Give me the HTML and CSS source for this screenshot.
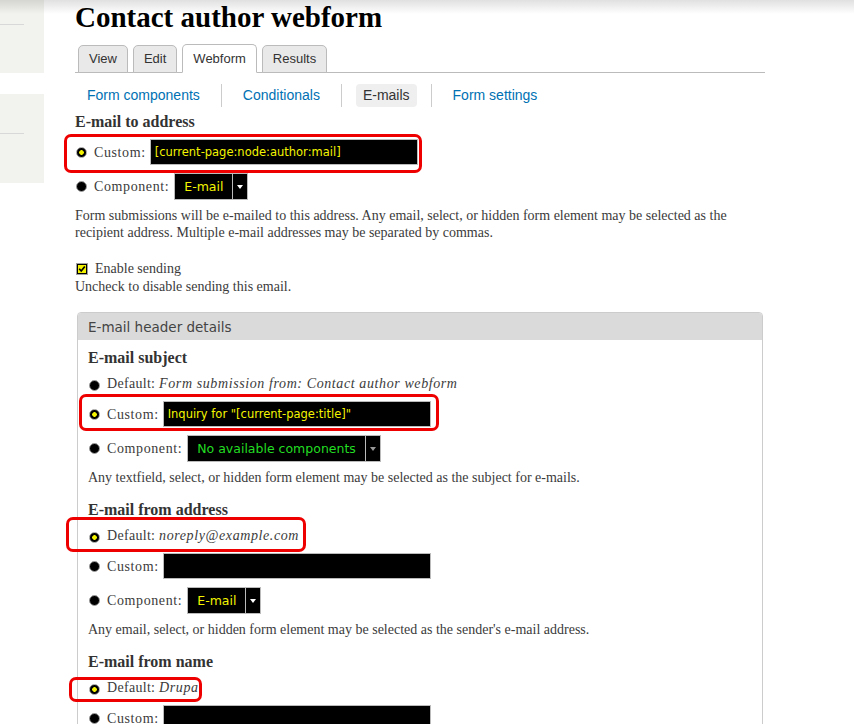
FILE: index.html
```html
<!DOCTYPE html>
<html lang="en">
<head>
<meta charset="utf-8">
<title>Contact author webform</title>
<link rel="stylesheet" href="styles.css">
</head>
<body>
<div class="shade"></div>
<div class="page">
  <aside class="sidebar">
    <div class="sb-block sb1"><div class="sb-line"></div></div>
    <div class="sb-block sb2"><div class="sb-line"></div></div>
  </aside>
  <main class="main">
    <h1 class="title">Contact author webform</h1>
    <ul class="tabs">
      <li class="tab">View</li>
      <li class="tab">Edit</li>
      <li class="tab active">Webform</li>
      <li class="tab">Results</li>
    </ul>
    <ul class="subtabs">
      <li><a href="#">Form components</a></li>
      <li><a href="#">Conditionals</a></li>
      <li><a href="#" class="current">E-mails</a></li>
      <li><a href="#">Form settings</a></li>
    </ul>

    <section class="group top">
      <h2 class="h">E-mail to address</h2>
      <div class="opts">
        <div class="opt mark m1"><span class="radio on"></span><span class="lbl">Custom:</span><input class="txt" type="text" value="[current-page:node:author:mail]"></div>
        <div class="opt"><span class="radio"></span><span class="lbl p">Component:</span><span class="select"><span class="val">E-mail</span><span class="arrow"></span></span></div>
      </div>
      <p class="desc">Form submissions will be e-mailed to this address. Any email, select, or hidden form element may be selected as the<br>recipient address. Multiple e-mail addresses may be separated by commas.</p>
    </section>

    <div class="enable">
      <div class="cbrow">
        <svg class="cb" width="12" height="12" viewBox="0 0 12 12"><rect x="0.5" y="0.5" width="11" height="11" fill="#000" stroke="#a0a0a0"/><rect x="2" y="2" width="8" height="8" fill="#f2f200"/><path d="M3.2 5.8 L5.2 8 L8.8 3.4" stroke="#000" stroke-width="1.7" fill="none"/></svg>
        <span>Enable sending</span>
      </div>
      <div class="hint">Uncheck to disable sending this email.</div>
    </div>

    <div class="fieldset">
      <div class="legend">E-mail header details</div>
      <div class="fs-body">
        <section class="group">
          <h3 class="h">E-mail subject</h3>
          <div class="opts">
            <div class="opt text"><span class="radio"></span><span class="lbl d">Default: <em>Form submission from: Contact author webform</em></span></div>
            <div class="opt mark m2"><span class="radio on"></span><span class="lbl">Custom:</span><input class="txt" type="text" value="Inquiry for &quot;[current-page:title]&quot;"></div>
            <div class="opt"><span class="radio"></span><span class="lbl p">Component:</span><span class="select none"><span class="val">No available components</span><span class="arrow"></span></span></div>
          </div>
          <p class="desc">Any textfield, select, or hidden form element may be selected as the subject for e-mails.</p>
        </section>

        <section class="group">
          <h3 class="h">E-mail from address</h3>
          <div class="opts">
            <div class="opt text mark m3"><span class="radio on"></span><span class="lbl d">Default: <em>noreply@example.com</em></span></div>
            <div class="opt"><span class="radio"></span><span class="lbl">Custom:</span><input class="txt" type="text" value=""></div>
            <div class="opt"><span class="radio"></span><span class="lbl p">Component:</span><span class="select"><span class="val">E-mail</span><span class="arrow"></span></span></div>
          </div>
          <p class="desc">Any email, select, or hidden form element may be selected as the sender's e-mail address.</p>
        </section>

        <section class="group">
          <h3 class="h">E-mail from name</h3>
          <div class="opts">
            <div class="opt text mark m4"><span class="radio on"></span><span class="lbl d">Default: <em>Drupa</em></span></div>
            <div class="opt"><span class="radio"></span><span class="lbl">Custom:</span><input class="txt" type="text" value=""></div>
            <div class="opt"><span class="radio"></span><span class="lbl p">Component:</span><span class="select"><span class="val">E-mail</span><span class="arrow"></span></span></div>
          </div>
          <p class="desc">Any textfield, select, or hidden form element may be selected as the sender's name for e-mails.</p>
        </section>
      </div>
    </div>
  </main>
</div>
</body>
</html>
```
FILE: styles.css
```css
html, body {
  margin: 0;
}
body {
  font-family: "Liberation Serif", "Times New Roman", serif;
  font-size: 14px;
  line-height: 17px;
  color: #3b3b3b;
  background: #fff;
}
.shade {
  position: absolute;
  left: 0;
  top: 0;
  right: 0;
  height: 14px;
  background: linear-gradient(to bottom, rgba(0,0,0,0.12), rgba(0,0,0,0));
  pointer-events: none;
  z-index: 5;
}
.page {
  display: flex;
  align-items: flex-start;
}
.sidebar {
  width: 44px;
  flex: none;
}
.sb-block {
  background: #f2f2ee;
  box-sizing: border-box;
}
.sb1 {
  height: 73px;
  padding-top: 24px;
}
.sb2 {
  height: 89px;
  margin-top: 21px;
  padding-top: 39px;
}
.sb-line {
  width: 24px;
  height: 1px;
  background: #d8d8d8;
}
.main {
  margin-left: 31px;
  width: 690px;
  flex: none;
  padding-bottom: 40px;
}
.title {
  margin: 0;
  font: bold 29px/34px "Liberation Serif", "Times New Roman", serif;
  color: #000;
}

/* primary tabs */
.tabs {
  list-style: none;
  margin: 10px 0 0;
  padding: 0 0 0 3px;
  display: flex;
  align-items: flex-end;
  border-bottom: 1px solid #bbb;
  font: 13px "Liberation Sans", Arial, sans-serif;
  color: #333;
}
.tab {
  height: 26px;
  line-height: 26px;
  padding: 0 10px;
  margin: 0 5px -1px 0;
  border: 1px solid #bbb;
  border-radius: 5px 5px 0 0;
  background: #e9e9e9;
}
.tab.active {
  height: 27px;
  line-height: 27px;
  background: #fff;
  border-bottom-color: #fff;
}

/* secondary tabs */
.subtabs {
  list-style: none;
  margin: 11px 0 0;
  padding: 0;
  display: flex;
  font: 14px/23px "Liberation Sans", Arial, sans-serif;
}
.subtabs li {
  padding: 0 14px;
  border-left: 1px solid #ccc;
}
.subtabs li:first-child {
  padding-left: 5px;
  border-left: 0;
}
.subtabs a {
  display: block;
  padding: 0 7px;
  color: #0071b3;
  text-decoration: none;
  border-radius: 4px;
}
.subtabs a.current {
  background: #efefef;
  color: #333;
}

/* form groups */
.h {
  margin: 0;
  font: bold 16px/20px "Liberation Serif", "Times New Roman", serif;
  color: #333;
}
.top .h {
  margin-top: 5px;
}
.opts {
  display: flex;
  flex-direction: column;
  align-items: flex-start;
  gap: 8px;
  margin-top: 7px;
}
.top .opts {
  margin-top: 7px;
}
.opt {
  position: relative;
  display: flex;
  align-items: center;
}
.opt.text {
  height: 18px;
  line-height: 18px;
}
.radio {
  flex: none;
  width: 11px;
  height: 11px;
  box-sizing: border-box;
  border-radius: 50%;
  border: 1px solid #a0a0a0;
  background: #000;
  margin: 0 7px 0 1px;
}
.radio.on {
  background: radial-gradient(circle, #f4f400 0, #f4f400 2px, #000 2.6px);
}
.opt.text .radio {
  margin-top: 2px;
}
.lbl {
  white-space: nowrap;
  letter-spacing: 0.6px;
  margin-right: 4px;
}
.lbl.p {
  margin-right: 5px;
}
.lbl.d {
  letter-spacing: 0.3px;
}
em {
  font-style: italic;
  letter-spacing: 0.6px;
}
.txt {
  width: 268px;
  height: 26px;
  box-sizing: border-box;
  margin: 0;
  padding: 0 4px;
  border: 1px solid #bbb;
  border-radius: 0;
  background: #000;
  color: #f4f400;
  font: 11.5px "DejaVu Sans", sans-serif;
  outline: none;
}
.select {
  display: inline-flex;
  height: 27px;
  box-sizing: border-box;
  border: 1px solid #bbb;
  background: #000;
  font: 12.5px/25px "DejaVu Sans", sans-serif;
  color: #f4f400;
}
.select .val {
  padding: 0 9px;
  white-space: nowrap;
}
.select.none {
  color: #22dd22;
}
.arrow {
  width: 14px;
  border-left: 1px solid #bbb;
  display: flex;
  align-items: center;
  justify-content: center;
}
.arrow::before {
  content: "";
  border-left: 3.5px solid transparent;
  border-right: 3.5px solid transparent;
  border-top: 4px solid #fff;
}
.select.none .arrow::before {
  border-top-color: #999;
}
.desc {
  margin: 7px 0 0;
}

/* red annotation boxes */
.mark::after {
  content: "";
  position: absolute;
  box-sizing: border-box;
  border: 3px solid #ee0000;
  border-radius: 7px;
  pointer-events: none;
}
.m1::after {
  left: -11px;
  top: -5px;
  width: 358px;
  height: 39px;
}
.m2::after {
  left: -9px;
  top: -7px;
  width: 360px;
  height: 37px;
}
.m3::after {
  left: -22px;
  top: -10px;
  width: 240px;
  height: 35px;
}
.m4::after {
  left: -19px;
  top: -2px;
  width: 133px;
  height: 25px;
}

/* enable sending */
.enable {
  margin-top: 19px;
}
.cbrow {
  display: flex;
  align-items: center;
  height: 18px;
  line-height: 18px;
}
.cb {
  flex: none;
  margin: 0 7px 0 1px;
}
.hint {
  line-height: 17px;
}

/* fieldset */
.fieldset {
  margin: 17px 2px 0;
  border: 1px solid #ccc;
  border-radius: 4px 4px 0 0;
}
.legend {
  height: 27px;
  padding-left: 10px;
  background: #dadada;
  border-radius: 3px 3px 0 0;
  font: 13.5px/28px "DejaVu Sans", sans-serif;
  color: #444;
}
.fs-body {
  padding: 8px 10px 20px;
}
.fs-body .group + .group {
  margin-top: 14px;
}
```
